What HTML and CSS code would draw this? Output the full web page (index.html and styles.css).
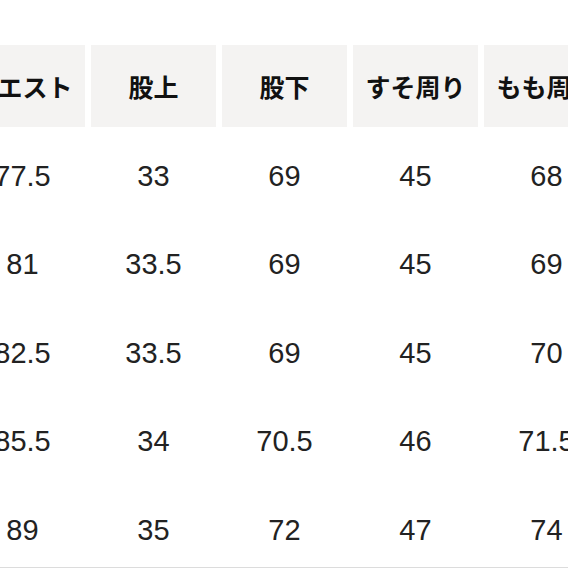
FILE: index.html
```html
<!DOCTYPE html>
<html lang="ja">
<head>
<meta charset="utf-8">
<link rel="stylesheet" href="styles.css">
</head>
<body>
<div class="viewport">
  <table class="size-table">
    <thead>
      <tr>
        <th>ウエスト</th>
        <th>股上</th>
        <th>股下</th>
        <th>すそ周り</th>
        <th>もも周り</th>
      </tr>
    </thead>
    <tbody>
      <tr><td>77.5</td><td>33</td><td>69</td><td>45</td><td>68</td></tr>
      <tr><td>81</td><td>33.5</td><td>69</td><td>45</td><td>69</td></tr>
      <tr><td>82.5</td><td>33.5</td><td>69</td><td>45</td><td>70</td></tr>
      <tr><td>85.5</td><td>34</td><td>70.5</td><td>46</td><td>71.5</td></tr>
      <tr class="last"><td><div class="cell">89</div></td><td><div class="cell">35</div></td><td><div class="cell">72</div></td><td><div class="cell">47</div></td><td><div class="cell">74</div></td></tr>
    </tbody>
  </table>
</div>
</body>
</html>
```
FILE: styles.css
```css
html, body {
  margin: 0;
  padding: 0;
  background: #ffffff;
}
.viewport {
  width: 568px;
  height: 568px;
  overflow: hidden;
  padding-top: 45px;
  box-sizing: border-box;
}
.size-table {
  margin-left: -46px;
  border-collapse: separate;
  border-spacing: 6px 0;
  table-layout: fixed;
  width: 661px;
  border-bottom: 1px solid #dcdcdc;
}
.size-table th {
  width: 125px;
  height: 82px;
  padding: 0;
  background: #f4f3f2;
  background-clip: padding-box;
  border-bottom: 5px solid #ffffff;
  font-family: "Noto Sans CJK JP", sans-serif;
  font-weight: 700;
  font-size: 25px;
  color: #111111;
  text-align: center;
  white-space: nowrap;
  overflow: visible;
}
.size-table td {
  padding: 0;
  height: 88.4px;
  line-height: 88.4px;
  font-family: "Liberation Sans", Arial, sans-serif;
  font-size: 29px;
  color: #222222;
  text-align: center;
  white-space: nowrap;
}
.size-table tr.last td {
  height: auto;
  vertical-align: top;
}
.size-table tr.last .cell {
  height: 81px;
  line-height: 88.4px;
}
```
